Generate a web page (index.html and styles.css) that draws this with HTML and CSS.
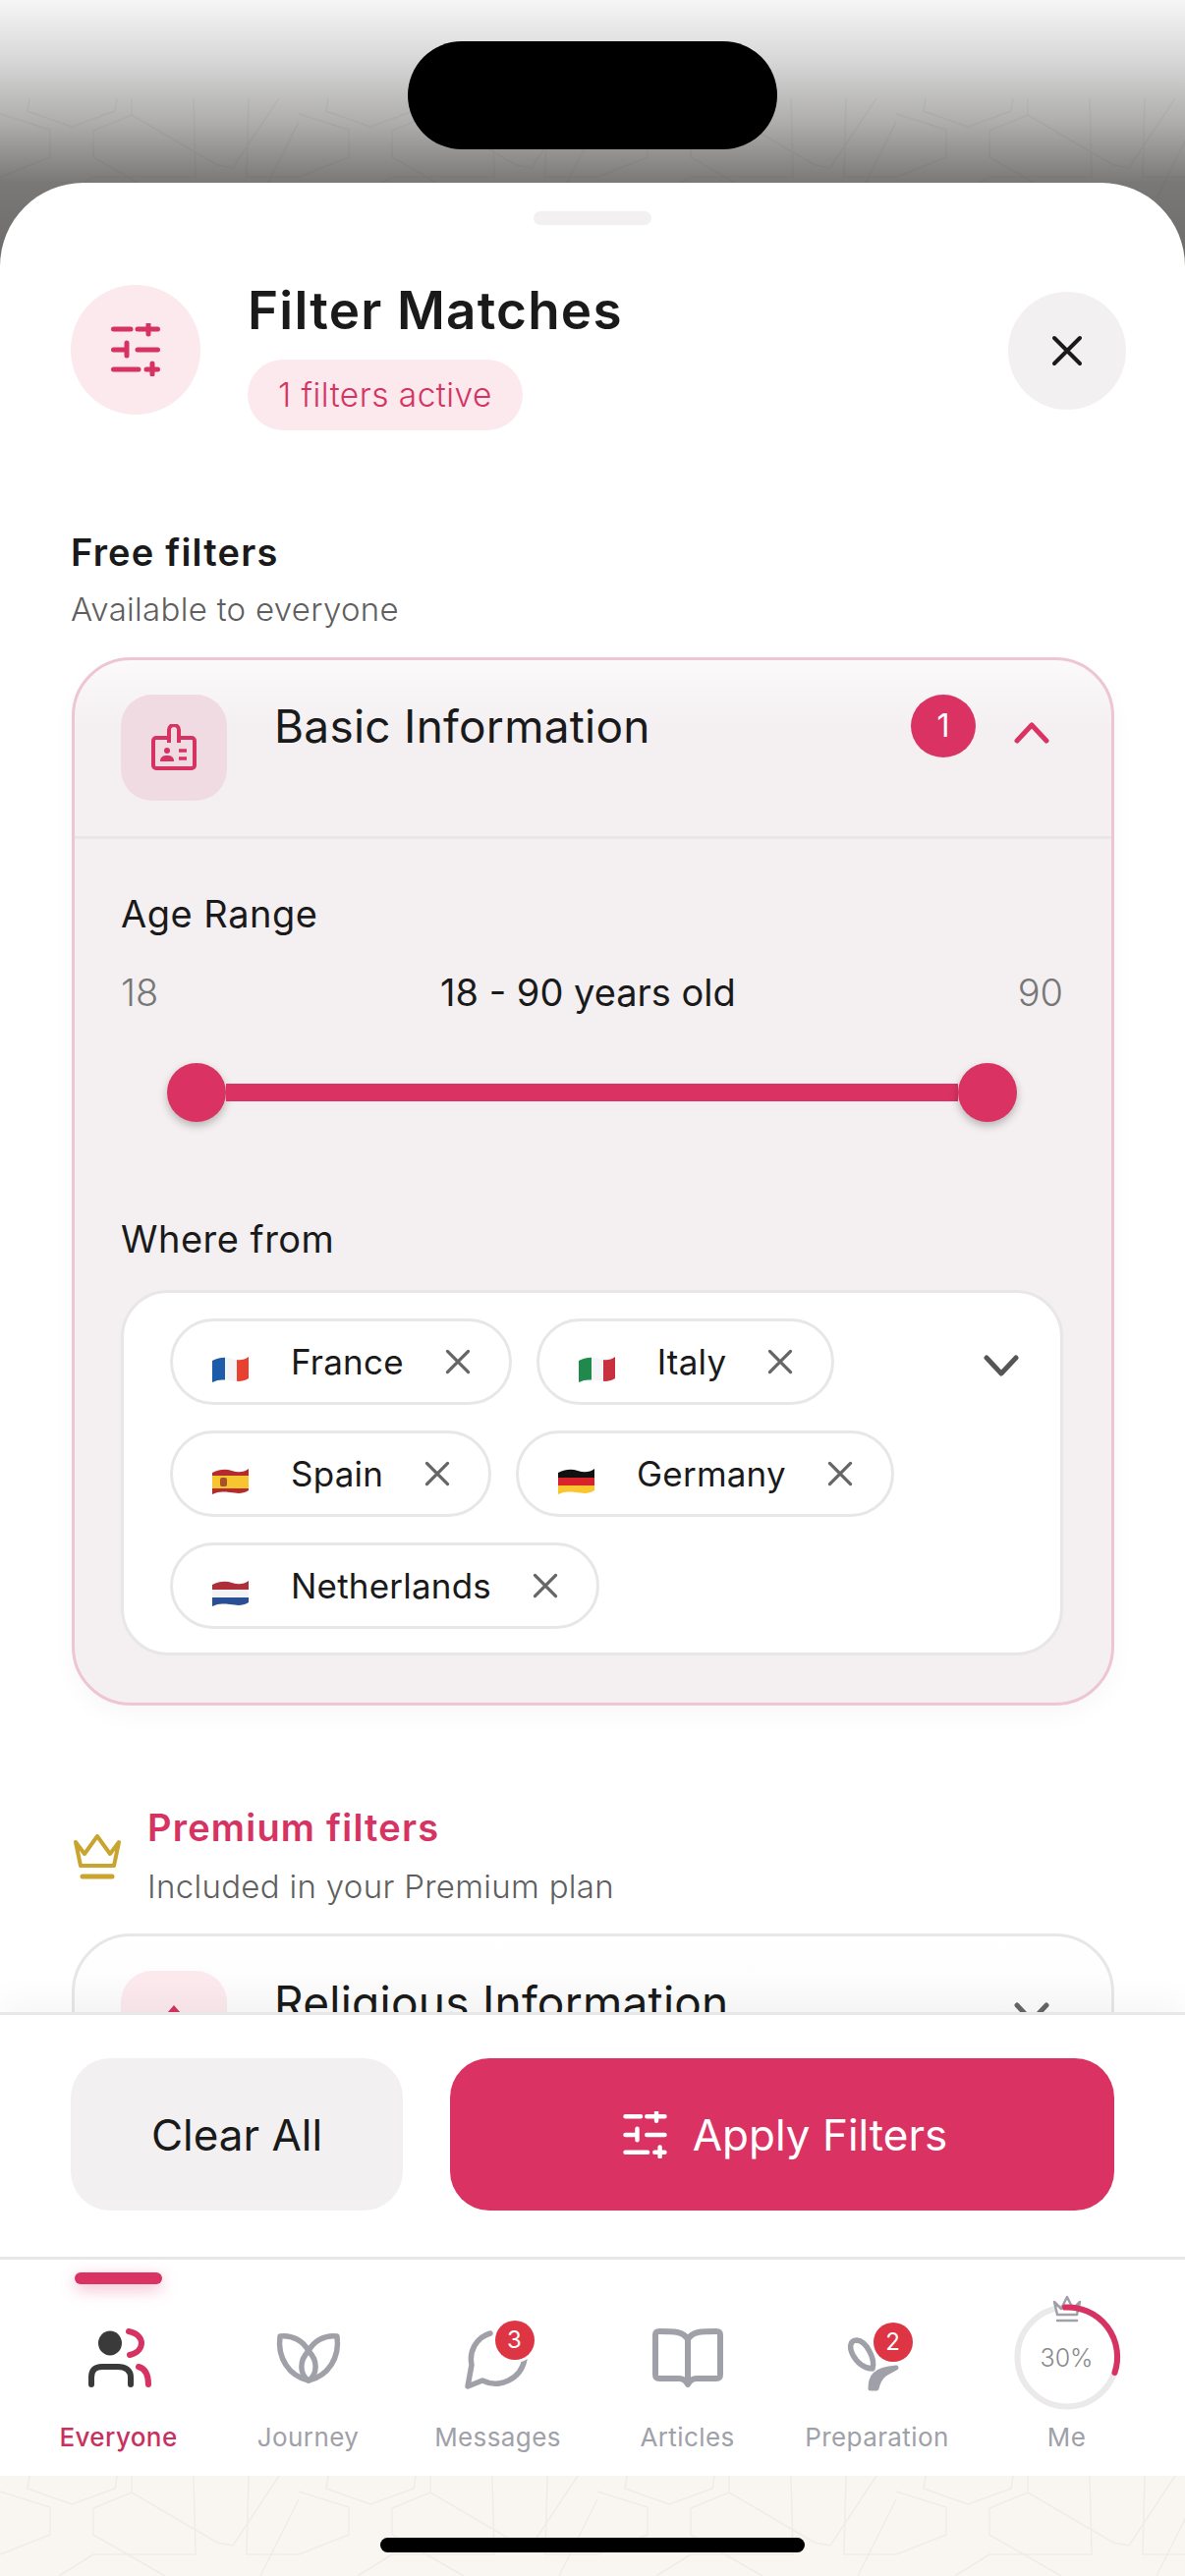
FILE: index.html
```html
<!DOCTYPE html>
<html lang="en">
<head>
    <meta charset="UTF-8">
    <meta name="viewport" content="width=device-width, initial-scale=1.0">
    <title>Filter Matches</title>
    <link rel="stylesheet" href="styles.css">
</head>
<body>
    <!-- Shared icons -->
    <svg class="defs" width="0" height="0">
        <defs>
            <clipPath id="wave"><path d="M0 4C8 0 14 0 20 2S32 4 37 0V22C30 26 26 25 18 24S6 23 0 26Z"/></clipPath>
            <symbol id="sliders" viewBox="0 0 50 54">
                <path d="M2.5 6H20M27 6H47.5M38 1V11M2.5 27H16M16 20V33M27 27H47.5M2.5 47H28M36 47H47.5M42 41V52" fill="none" stroke="currentColor" stroke-width="5" stroke-linecap="round"/>
            </symbol>
            <symbol id="cross" viewBox="0 0 32 32">
                <path d="M3 3L29 29M29 3L3 29" fill="none" stroke="currentColor" stroke-width="4" stroke-linecap="round"/>
            </symbol>
            <symbol id="chevron" viewBox="0 0 36 22">
                <path d="M3 3L18 19L33 3" fill="none" stroke="currentColor" stroke-width="5" stroke-linecap="round" stroke-linejoin="round"/>
            </symbol>
            <symbol id="pattern" viewBox="0 0 304 102">
                <path d="M30 0L28 13L73 29L117 13L119 0M0 16L51 32V60L0 80M95 33L134 17L221 68L237 71L304 -30M95 33V60L168 102M134 0V17M197 0L199 80H95L60 102M253 0L251 80H304M265 102L316 0" fill="none" stroke="currentColor" stroke-width="1.5"/>
            </symbol>
        </defs>
    </svg>

    <div class="screen">
        <div class="island"></div>

        <!-- Pattern on the page behind the sheet -->
        <div class="top-pattern">
            <svg class="tile"><use href="#pattern"/></svg>
            <svg class="tile"><use href="#pattern"/></svg>
            <svg class="tile"><use href="#pattern"/></svg>
            <svg class="tile"><use href="#pattern"/></svg>
        </div>

        <!-- Bottom sheet -->
        <section class="sheet">
            <div class="handle"></div>

            <header class="sheet-head">
                <div class="head-icon"><svg width="50" height="54"><use href="#sliders"/></svg></div>
                <div class="head-text">
                    <h1>Filter Matches</h1>
                    <span class="active-pill">1 filters active</span>
                </div>
                <button class="close-btn"><svg width="32" height="32"><use href="#cross"/></svg></button>
            </header>

            <div class="scroll">
                <h2 class="group-title">Free filters</h2>
                <p class="group-sub">Available to everyone</p>

                <div class="card card-open">
                    <div class="card-head">
                        <div class="card-icon">
                            <svg width="48" height="48" viewBox="0 0 48 48" fill="none" stroke="currentColor" stroke-width="4">
                                <rect x="3" y="14" width="42" height="31" rx="3"/>
                                <path d="M19 19V6a5 5 0 0 1 10 0V19" fill="#f0dbe3"/>
                                <circle cx="17" cy="27" r="3" fill="currentColor" stroke="none"/>
                                <path d="M10 38c0-5 3-6 7-6s7 1 7 6z" fill="currentColor" stroke="none"/>
                                <path d="M29 27H37M29 35H37" stroke-width="3.5"/>
                            </svg>
                        </div>
                        <h3 class="card-title">Basic Information</h3>
                        <span class="count">1</span>
                        <svg class="chevron-up" width="36" height="22"><use href="#chevron"/></svg>
                    </div>

                    <div class="card-body">
                        <div class="field-label">Age Range</div>
                        <div class="range-labels">
                            <span class="range-end">18</span>
                            <span class="range-value">18 - 90 years old</span>
                            <span class="range-end">90</span>
                        </div>
                        <div class="slider">
                            <span class="thumb"></span>
                            <span class="track"></span>
                            <span class="thumb"></span>
                        </div>

                        <div class="field-label where">Where from</div>
                        <div class="select-box">
                            <div class="chips">
                                <span class="chip">
                                    <svg class="flag" viewBox="0 0 37 26"><g clip-path="url(#wave)"><rect width="13" height="26" fill="#1d5aa8"/><rect x="13" width="12" height="26" fill="#f4f4f6"/><rect x="25" width="12" height="26" fill="#e8412f"/></g></svg>
                                    <span class="chip-name">France</span>
                                    <svg class="chip-x" width="26" height="26"><use href="#cross"/></svg>
                                </span>
                                <span class="chip">
                                    <svg class="flag" viewBox="0 0 37 26"><g clip-path="url(#wave)"><rect width="13" height="26" fill="#1f8a4c"/><rect x="13" width="12" height="26" fill="#f4f4f6"/><rect x="25" width="12" height="26" fill="#c8303f"/></g></svg>
                                    <span class="chip-name">Italy</span>
                                    <svg class="chip-x" width="26" height="26"><use href="#cross"/></svg>
                                </span>
                                <span class="chip">
                                    <svg class="flag" viewBox="0 0 37 26"><g clip-path="url(#wave)"><rect width="37" height="26" fill="#b52b2b"/><rect y="7" width="37" height="13" fill="#f6c530"/><rect x="8" y="9" width="7" height="9" rx="2" fill="#a5512a"/></g></svg>
                                    <span class="chip-name">Spain</span>
                                    <svg class="chip-x" width="26" height="26"><use href="#cross"/></svg>
                                </span>
                                <span class="chip">
                                    <svg class="flag" viewBox="0 0 37 26"><g clip-path="url(#wave)"><rect width="37" height="9" fill="#111"/><rect y="9" width="37" height="8" fill="#d8232a"/><rect y="17" width="37" height="9" fill="#f9c62f"/></g></svg>
                                    <span class="chip-name">Germany</span>
                                    <svg class="chip-x" width="26" height="26"><use href="#cross"/></svg>
                                </span>
                                <span class="chip">
                                    <svg class="flag" viewBox="0 0 37 26"><g clip-path="url(#wave)"><rect width="37" height="9" fill="#ad2f3a"/><rect y="9" width="37" height="8" fill="#f4f4f6"/><rect y="17" width="37" height="9" fill="#2b4f94"/></g></svg>
                                    <span class="chip-name">Netherlands</span>
                                    <svg class="chip-x" width="26" height="26"><use href="#cross"/></svg>
                                </span>
                            </div>
                            <svg class="select-arrow" width="36" height="22"><use href="#chevron"/></svg>
                        </div>
                    </div>
                </div>

                <div class="premium-head">
                    <svg class="crown" width="48" height="46" viewBox="0 0 48 46" fill="none" stroke="#c9a42f" stroke-width="4" stroke-linejoin="round" stroke-linecap="round">
                        <path d="M2 8L11 20L24 2L37 20L46 8L41 32H7Z"/>
                        <path d="M9 43H39" stroke-width="5"/>
                    </svg>
                    <div>
                        <h2 class="group-title premium">Premium filters</h2>
                        <p class="group-sub">Included in your Premium plan</p>
                    </div>
                </div>

                <div class="card card-closed">
                    <div class="card-head">
                        <div class="card-icon light">
                            <svg width="54" height="48" viewBox="0 0 54 48" fill="none" stroke="currentColor" stroke-width="4"><path d="M3 24L15 22L27 8L39 22L51 24M10 24V44H44V24"/></svg>
                        </div>
                        <h3 class="card-title closed">Religious Information</h3>
                        <svg class="chevron-down" width="36" height="22"><use href="#chevron"/></svg>
                    </div>
                </div>
            </div>

            <footer class="actions">
                <button class="btn-clear">Clear All</button>
                <button class="btn-apply"><svg width="45" height="48"><use href="#sliders"/></svg>Apply Filters</button>
            </footer>
        </section>

        <!-- Tab bar -->
        <nav class="tabbar">
            <div class="tab active">
                <span class="tab-bar-mark"></span>
                <div class="tab-icon">
                    <svg width="70" height="70" viewBox="0 0 70 70" fill="none" stroke-linecap="round">
                        <ellipse cx="26" cy="20" rx="12" ry="12.5" fill="#3a3a3a"/>
                        <path d="M7 62V55C7 47 11 44 18 44H34C41 44 47 47 47 55V62" stroke="#3a3a3a" stroke-width="6"/>
                        <path d="M45 8C55 10 58 16 58 20C58 25 54 30 46 32M55 44C62 46 65 52 65 62" stroke="#d63362" stroke-width="6"/>
                    </svg>
                </div>
                <span class="tab-label">Everyone</span>
            </div>
            <div class="tab">
                <div class="tab-icon">
                    <svg width="70" height="70" viewBox="0 0 70 70" fill="none" stroke="#a0a1a8" stroke-width="5.5" stroke-linejoin="round">
                        <path d="M6 13C18 11 30 18 35 28C40 18 52 11 64 13C67 35 55 53 35 58C15 53 3 35 6 13Z"/>
                        <path d="M35 28C25 38 26 52 35 58C44 52 45 38 35 28Z"/>
                    </svg>
                </div>
                <span class="tab-label">Journey</span>
            </div>
            <div class="tab">
                <div class="tab-icon">
                    <svg width="70" height="70" viewBox="0 0 70 70" fill="none" stroke="#a0a1a8" stroke-width="5.5" stroke-linejoin="round" stroke-linecap="round">
                        <path d="M27 10C13 14 5 28 8 42L4 64L19 58C35 66 58 58 62 36"/>
                    </svg>
                    <span class="tab-badge">3</span>
                </div>
                <span class="tab-label">Messages</span>
            </div>
            <div class="tab">
                <div class="tab-icon">
                    <svg width="70" height="70" viewBox="0 0 70 70" fill="none" stroke="#a0a1a8" stroke-width="6" stroke-linejoin="round">
                        <path d="M35 16C30 8 22 8 6 8C3 8 2 9 2 12V52C2 55 3 56 6 56H26C30 56 33 58 35 62C37 58 40 56 44 56H64C67 56 68 55 68 52V12C68 9 67 8 64 8C48 8 40 8 35 16ZM35 16V60"/>
                    </svg>
                </div>
                <span class="tab-label">Articles</span>
            </div>
            <div class="tab">
                <div class="tab-icon">
                    <svg width="70" height="70" viewBox="0 0 70 70" fill="none" stroke="#a0a1a8" stroke-linejoin="round" stroke-linecap="round">
                        <path d="M14 17C7 17 6 24 10 32C14 40 22 46 30 46C33 36 24 18 14 17Z" stroke-width="5.5"/>
                        <path d="M28 66C28 54 32 47 54 45C46 50 38 50 34 66Z" fill="#a0a1a8" stroke-width="5"/>
                    </svg>
                    <span class="tab-badge seed">2</span>
                </div>
                <span class="tab-label">Preparation</span>
            </div>
            <div class="tab">
                <div class="tab-icon">
                    <svg class="ring" width="70" height="70" viewBox="0 0 70 70" fill="none" stroke-linecap="round">
                        <circle cx="35" cy="34" r="50.5" stroke="#ebe9ea" stroke-width="6"/>
                        <path d="M22 -22L29 -15L35 -27L41 -15L48 -22L45 -9H25Z" fill="#fff" stroke="#a0a1a8" stroke-width="2.5" stroke-linejoin="round"/>
                        <path d="M25 -3H45" stroke="#a0a1a8" stroke-width="2.5"/>
                        <path d="M33 -16.5A50.5 50.5 0 0 1 83.5 50" stroke="#d63362" stroke-width="6"/>
                    </svg>
                    <span class="ring-label">30%</span>
                </div>
                <span class="tab-label">Me</span>
            </div>
        </nav>

        <!-- Strip of page pattern under the tab bar -->
        <div class="bottom-strip">
            <svg class="tile"><use href="#pattern"/></svg>
            <svg class="tile"><use href="#pattern"/></svg>
            <svg class="tile"><use href="#pattern"/></svg>
            <svg class="tile"><use href="#pattern"/></svg>
            <div class="home-bar"></div>
        </div>
    </div>
</body>
</html>
```

FILE: styles.css
```css
* {
    margin: 0;
    padding: 0;
    box-sizing: border-box;
    font-family: Inter, "Noto Sans", sans-serif;
}

body {
    width: 1206px;
    height: 2622px;
    overflow: hidden;
    background-color: #f9f6f1;
}

button {
    border: none;
    cursor: pointer;
}

.defs {
    position: absolute;
}

.screen {
    position: relative;
    display: flex;
    flex-direction: column;
    width: 1206px;
    height: 2622px;
    background: linear-gradient(#f6f6f6 0, #d8d8d8 60px, #aeadac 125px, #7a7876 186px, #6c6a68 280px) no-repeat;
    background-size: 100% 280px;
}

.island {
    position: absolute;
    top: 42px;
    left: 415px;
    width: 376px;
    height: 110px;
    border-radius: 55px;
    background-color: #000;
    z-index: 3;
}

.top-pattern {
    position: absolute;
    top: 100px;
    left: 0;
    display: flex;
    width: 1206px;
    overflow: hidden;
    color: rgba(60, 58, 56, 0.05);
}

.tile {
    display: block;
    flex: none;
    width: 304px;
    height: 102px;
}

/* Bottom sheet */
.sheet {
    position: relative;
    display: flex;
    flex-direction: column;
    height: 2111px;
    margin-top: 186px;
    background-color: #fff;
    border-radius: 85px 85px 0 0;
    overflow: hidden;
}

.handle {
    flex: none;
    width: 120px;
    height: 14px;
    margin: 29px auto 0;
    border-radius: 7px;
    background-color: #f3f0f1;
}

.sheet-head {
    flex: none;
    display: flex;
    height: 133px;
    margin-top: 61px;
    padding: 0 60px 0 72px;
}

.head-icon {
    flex: none;
    display: flex;
    align-items: center;
    justify-content: center;
    width: 132px;
    height: 132px;
    border-radius: 50%;
    background-color: #fbe9ee;
    color: #d63362;
}

.head-text {
    flex: 1;
    margin: -7px 0 0 48px;
}

.head-text h1 {
    font-size: 53px;
    line-height: 66px;
    font-weight: 600;
    letter-spacing: 1.2px;
    color: #1a1a1a;
}

.active-pill {
    display: inline-block;
    height: 72px;
    margin-top: 17px;
    padding: 0 31px;
    border-radius: 36px;
    background-color: #fbe9ee;
    color: #d63362;
    font-size: 33.5px;
    font-weight: 300;
    letter-spacing: 0.45px;
    line-height: 72px;
}

.close-btn {
    flex: none;
    display: flex;
    align-items: center;
    justify-content: center;
    width: 120px;
    height: 120px;
    margin-top: 7px;
    border-radius: 50%;
    background-color: #f3f0f1;
    color: #1a1a1a;
}

/* Scrolling part */
.scroll {
    flex: 1;
    min-height: 0;
    overflow: hidden;
    padding: 114px 72px 0 73px;
}

.group-title {
    margin-left: -1px;
    font-size: 38px;
    line-height: 50px;
    font-weight: 600;
    letter-spacing: 1.2px;
    color: #1a1a1a;
}

.group-title.premium {
    color: #d63362;
}

.group-sub {
    margin: 8px 0 0 -1px;
    font-size: 33px;
    line-height: 50px;
    font-weight: 300;
    letter-spacing: 0.3px;
    color: #5f5f5f;
}

.card {
    border-radius: 60px;
    border: 3px solid #e8e6e8;
    background: linear-gradient(#fff, #fafafa 100px);
}

.card-open {
    height: 1067px;
    margin-top: 24px;
    border-color: #eec5d2;
    background: linear-gradient(#fbf9fa, #f4f0f2 70px);
    box-shadow: 0 10px 24px rgba(0, 0, 0, 0.03);
}

.card-head {
    display: flex;
    height: 182px;
    padding: 35px 47px 0;
    border-bottom: 3px solid #e9e6e8;
}

.card-closed .card-head {
    border-bottom: none;
}

.card-icon {
    flex: none;
    display: flex;
    align-items: center;
    justify-content: center;
    width: 108px;
    height: 108px;
    border-radius: 32px;
    background-color: #f0dbe3;
    color: #d63362;
}

.card-icon.light {
    background-color: #fbe9ee;
}

.card-title {
    flex: 1;
    margin-left: 48px;
    font-size: 46px;
    line-height: 64px;
    font-weight: 400;
    letter-spacing: 0.25px;
    color: #1a1a1a;
}

.count {
    flex: none;
    width: 66px;
    height: 64px;
    border-radius: 50%;
    background-color: #da3263;
    color: #fff;
    font-size: 32px;
    line-height: 64px;
    text-align: center;
}

.chevron-up {
    flex: none;
    margin: 28px 16px 0 39px;
    color: #da3263;
    transform: rotate(180deg);
}

.chevron-down {
    flex: none;
    margin: 32px 16px 0 0;
    color: #666;
}

.card-body {
    padding: 51px 49px 0 47px;
}

.field-label {
    font-size: 38px;
    line-height: 50px;
    letter-spacing: 0.5px;
    color: #1a1a1a;
}

.field-label.where {
    margin-top: 94px;
}

.range-labels {
    display: flex;
    justify-content: space-between;
    align-items: center;
    margin-top: 30px;
    font-size: 38px;
    line-height: 50px;
}

.range-end {
    color: #777;
    font-weight: 300;
}

.range-value {
    color: #1a1a1a;
    font-weight: 400;
}

.slider {
    display: flex;
    align-items: center;
    margin: 47px 0 0 47px;
    width: 865px;
}

.thumb {
    flex: none;
    width: 60px;
    height: 60px;
    border-radius: 50%;
    background-color: #da3263;
    box-shadow: 0 4px 8px rgba(0, 0, 0, 0.25);
}

.track {
    flex: 1;
    height: 18px;
    background-color: #da3263;
}

.select-box {
    display: flex;
    align-items: flex-start;
    height: 372px;
    margin-top: 27px;
    padding: 26px 42px 0 47px;
    border: 3px solid #e8e6e8;
    border-radius: 48px;
    background-color: #fff;
}

.chips {
    flex: 1;
    display: flex;
    flex-wrap: wrap;
    gap: 26px 25px;
}

.chip {
    display: flex;
    align-items: center;
    height: 88px;
    padding: 0 39px 0 40px;
    border: 3px solid #e8e6e8;
    border-radius: 44px;
    background-color: #fff;
}

.flag {
    flex: none;
    width: 37px;
    height: 26px;
    margin: 16px 43px 0 0;
}

.chip-name {
    font-size: 35px;
    letter-spacing: 0.2px;
    color: #1a1a1a;
}

.chip-x {
    flex: none;
    margin-left: 42px;
    color: #666;
}

.select-arrow {
    flex: none;
    margin-top: 37px;
    color: #555;
}

.premium-head {
    display: flex;
    align-items: center;
    gap: 28px;
    margin: 99px 0 0 2px;
}

.premium-head .group-sub {
    margin-top: 10px;
}

.crown {
    flex: none;
}

.card-closed {
    margin-top: 23px;
}

/* Footer buttons */
.actions {
    position: relative;
    flex: none;
    display: flex;
    gap: 48px;
    height: 249px;
    padding: 44px 72px 0;
    border-top: 3px solid #e8e6e8;
    background-color: #fff;
    box-shadow: 0 -14px 30px rgba(0, 0, 0, 0.035);
}

.btn-clear,
.btn-apply {
    height: 155px;
    border-radius: 40px;
    font-size: 44px;
}

.btn-clear {
    flex: none;
    width: 338px;
    background-color: #f3f0f2;
    color: #1a1a1a;
}

.btn-apply {
    flex: 1;
    display: flex;
    align-items: center;
    justify-content: center;
    gap: 26px;
    padding-left: 6px;
    background-color: #da3263;
    color: #fff;
}

/* Tab bar */
.tabbar {
    flex: none;
    display: grid;
    grid-template-columns: repeat(6, 1fr);
    height: 223px;
    padding: 0 24px;
    border-top: 3px solid #e8e6e8;
    background-color: #fff;
}

.tab {
    position: relative;
    display: flex;
    flex-direction: column;
    align-items: center;
    padding-top: 65px;
}

.tab-bar-mark {
    position: absolute;
    top: 13px;
    left: 52px;
    width: 89px;
    height: 12px;
    border-radius: 6px;
    background-color: #da3263;
    box-shadow: 0 5px 16px rgba(218, 50, 99, 0.35);
}

.tab-icon {
    position: relative;
    flex: none;
    width: 70px;
    height: 70px;
}

.tab-icon svg {
    display: block;
    overflow: visible;
}

.tab-label {
    margin-top: 30px;
    font-size: 26px;
    line-height: 32px;
    letter-spacing: 0.4px;
    color: #a0a1a8;
}

.tab.active .tab-label {
    color: #c9305f;
    font-weight: 500;
}

.tab-badge {
    position: absolute;
    top: -3px;
    left: 32px;
    width: 40px;
    height: 40px;
    border-radius: 50%;
    background-color: #de3545;
    box-shadow: 0 0 0 3px #fff;
    color: #fff;
    font-size: 24px;
    line-height: 40px;
    text-align: center;
}

.tab-badge.seed {
    left: 31px;
    top: -1px;
}

.ring-label {
    position: absolute;
    top: 19px;
    left: 0;
    width: 70px;
    font-size: 25px;
    font-weight: 300;
    line-height: 32px;
    text-align: center;
    color: #8a8a8a;
}

/* Bottom strip */
.bottom-strip {
    position: relative;
    flex: none;
    display: flex;
    height: 102px;
    color: #efece7;
    overflow: hidden;
}

.home-bar {
    position: absolute;
    top: 63px;
    left: 387px;
    width: 432px;
    height: 15px;
    border-radius: 8px;
    background-color: #000;
}
```
